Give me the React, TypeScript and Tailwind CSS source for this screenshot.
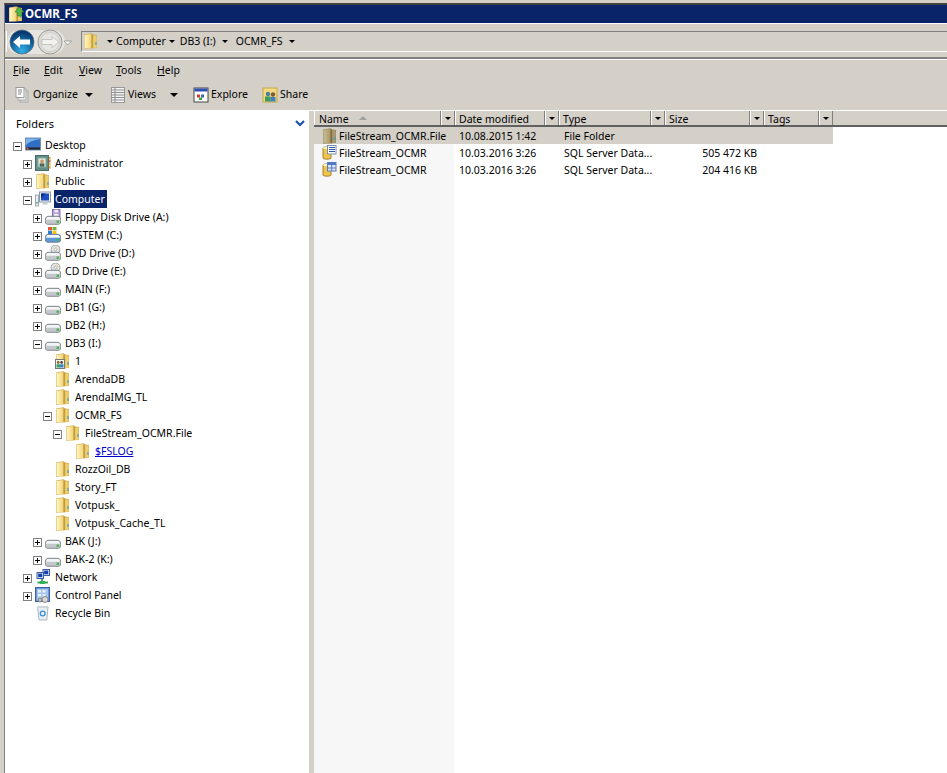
import type { ReactNode } from "react";

type IconName =
  | "desktop"
  | "contact"
  | "folder"
  | "sharedFolder"
  | "computer"
  | "floppy"
  | "system"
  | "optical"
  | "drive"
  | "network"
  | "control"
  | "bin";

type TreeRow = {
  label: string;
  level: 0 | 1 | 2 | 3 | 4 | 5;
  icon: IconName;
  toggle?: "plus" | "minus";
  selected?: boolean;
  link?: boolean;
};

const treeRows: TreeRow[] = [
  { label: "Desktop", level: 0, icon: "desktop", toggle: "minus" },
  { label: "Administrator", level: 1, icon: "contact", toggle: "plus" },
  { label: "Public", level: 1, icon: "folder", toggle: "plus" },
  { label: "Computer", level: 1, icon: "computer", toggle: "minus", selected: true },
  { label: "Floppy Disk Drive (A:)", level: 2, icon: "floppy", toggle: "plus" },
  { label: "SYSTEM (C:)", level: 2, icon: "system", toggle: "plus" },
  { label: "DVD Drive (D:)", level: 2, icon: "optical", toggle: "plus" },
  { label: "CD Drive (E:)", level: 2, icon: "optical", toggle: "plus" },
  { label: "MAIN (F:)", level: 2, icon: "drive", toggle: "plus" },
  { label: "DB1 (G:)", level: 2, icon: "drive", toggle: "plus" },
  { label: "DB2 (H:)", level: 2, icon: "drive", toggle: "plus" },
  { label: "DB3 (I:)", level: 2, icon: "drive", toggle: "minus" },
  { label: "1", level: 3, icon: "sharedFolder" },
  { label: "ArendaDB", level: 3, icon: "folder" },
  { label: "ArendaIMG_TL", level: 3, icon: "folder" },
  { label: "OCMR_FS", level: 3, icon: "folder", toggle: "minus" },
  { label: "FileStream_OCMR.File", level: 4, icon: "folder", toggle: "minus" },
  { label: "$FSLOG", level: 5, icon: "folder", link: true },
  { label: "RozzOil_DB", level: 3, icon: "folder" },
  { label: "Story_FT", level: 3, icon: "folder" },
  { label: "Votpusk_", level: 3, icon: "folder" },
  { label: "Votpusk_Cache_TL", level: 3, icon: "folder" },
  { label: "BAK (J:)", level: 2, icon: "drive", toggle: "plus" },
  { label: "BAK-2 (K:)", level: 2, icon: "drive", toggle: "plus" },
  { label: "Network", level: 1, icon: "network", toggle: "plus" },
  { label: "Control Panel", level: 1, icon: "control", toggle: "plus" },
  { label: "Recycle Bin", level: 1, icon: "bin" },
];

const levelPadding = ["pl-[8px]", "pl-[18px]", "pl-[28px]", "pl-[38px]", "pl-[48px]", "pl-[58px]"];

function FolderShape({ faded }: { faded?: boolean }) {
  return (
    <g>
      <defs>
        <linearGradient id="folderLeaf" x1="0" y1="0" x2="1" y2="0">
          <stop offset="0" stopColor="#fff6c8" />
          <stop offset="1" stopColor="#f2d374" />
        </linearGradient>
        <linearGradient id="folderLeafFaded" x1="0" y1="0" x2="1" y2="0">
          <stop offset="0" stopColor="#c9bd98" />
          <stop offset="1" stopColor="#ab9766" />
        </linearGradient>
      </defs>
      <path d="M1 1.5 L8.5 0.3 L10.3 1.6 L14 2 L14 15 L1 15.8 Z" fill={faded ? "#9c8a5e" : "#d0ad55"} />
      <path d="M1.5 2 L8.5 1 L8.5 15.3 L1.5 15.3 Z" fill={faded ? "url(#folderLeafFaded)" : "url(#folderLeaf)"} />
      <path d="M8.5 1 L10.2 2.3 L10.2 15 L8.5 15.3 Z" fill={faded ? "#7f6d44" : "#c49c40"} />
      <path d="M10.2 2.5 L13.6 2.6 L13.6 14.7 L10.2 15 Z" fill={faded ? "#a8986f" : "#efcf6c"} />
      <rect x="12.4" y="9" width="1.1" height="3" fill="#39a0c0" />
    </g>
  );
}

function Icon({ name }: { name: IconName }) {
  let body: ReactNode = null;
  if (name === "folder") body = <FolderShape />;
  if (name === "sharedFolder")
    body = (
      <>
        <FolderShape />
        <rect x="0.5" y="6.5" width="9" height="9" fill="#f2f2f2" stroke="#777" />
        <circle cx="3.2" cy="9.4" r="1.3" fill="#8a5a2b" />
        <circle cx="6.6" cy="9.4" r="1.3" fill="#4a3a2a" />
        <rect x="1.5" y="11.3" width="3.5" height="3.2" fill="#38a169" />
        <rect x="5" y="11.3" width="3.5" height="3.2" fill="#3b82c4" />
      </>
    );
  if (name === "desktop")
    body = (
      <>
        <rect x="0.5" y="1" width="15" height="12" fill="#2f6fc4" stroke="#7c8fa8" />
        <path d="M1 8 C5 4 10 3 15 2 L15 1.5 L1 1.5 Z" fill="#7db3e8" />
        <rect x="1" y="10.5" width="14" height="2" fill="#222" />
        <rect x="1.5" y="10.8" width="2" height="1.5" fill="#e25b3a" />
      </>
    );
  if (name === "contact")
    body = (
      <>
        <rect x="0.5" y="0.5" width="13" height="15" fill="#5f8f88" stroke="#466b68" />
        <rect x="3" y="3" width="8" height="9" fill="#e4ead6" stroke="#8aa7a0" />
        <circle cx="7" cy="6.3" r="1.9" fill="#c99b6e" />
        <rect x="4.6" y="8.4" width="4.8" height="3.2" fill="#47665f" />
        <rect x="13.8" y="2" width="1.8" height="2.5" fill="#e2a33a" />
        <rect x="13.8" y="5" width="1.8" height="2.5" fill="#d8705c" />
        <rect x="13.8" y="8" width="1.8" height="2.5" fill="#e2c33a" />
        <rect x="13.8" y="11" width="1.8" height="2.5" fill="#e2a33a" />
      </>
    );
  if (name === "computer")
    body = (
      <>
        <rect x="0.5" y="4" width="3" height="11" fill="#e8ecef" stroke="#8b98a5" strokeWidth="0.8" />
        <rect x="1.2" y="11" width="1.6" height="1.6" fill="#55b04f" />
        <rect x="4.5" y="1" width="11" height="10" fill="#eef2f6" stroke="#8b98a5" />
        <rect x="6" y="2.5" width="8" height="7" fill="#1f4fc0" />
        <path d="M6 2.5 H11 L6 7 Z" fill="#0f2f8a" />
        <rect x="7.5" y="11.5" width="5" height="2" fill="#c5ccd3" />
      </>
    );
  if (name === "drive" || name === "floppy" || name === "system" || name === "optical")
    body = (
      <>
        {name === "floppy" && (
          <>
            <rect x="7.5" y="0.5" width="7.5" height="7.5" fill="#b6a3d9" stroke="#6f5a9c" strokeWidth="0.8" />
            <rect x="9.5" y="0.8" width="3.5" height="2.6" fill="#f1edf9" />
            <rect x="9" y="5" width="4.5" height="3" fill="#efecf6" />
          </>
        )}
        {name === "optical" && (
          <>
            <circle cx="10.5" cy="4.5" r="4.5" fill="#dfe3e6" stroke="#8c9296" strokeWidth="0.8" />
            <circle cx="10.5" cy="4.5" r="1.3" fill="#fff" stroke="#8c9296" strokeWidth="0.6" />
            <path d="M10.5 0.5 L14.5 3.5 L11.5 4 Z" fill="#f6d9a6" />
          </>
        )}
        <path
          d="M3 7.3 L13 7.3 C15 7.3 15.7 9.5 15.7 11.5 C15.7 14 15 15.3 13.5 15.3 L2.5 15.3 C1 15.3 0.3 14 0.3 11.5 C0.3 9.5 1 7.3 3 7.3 Z"
          fill={name === "system" ? "#5d98d6" : "#c3c8cc"}
          stroke="#6d7378"
          strokeWidth="0.8"
        />
        <path d="M3 8 L13 8 C14.2 8 14.9 9.6 15 10.8 L1 10.8 C1.1 9.6 1.8 8 3 8 Z" fill="#f4f5f6" />
        <rect x="11.5" y="11.5" width="2.5" height="2.4" fill="#49b548" />
        {name === "system" && (
          <>
            <rect x="3" y="0" width="4" height="3.3" fill="#e8562e" />
            <rect x="7.5" y="0" width="4" height="3" fill="#6cb33f" />
            <rect x="3" y="3.7" width="4" height="3.5" fill="#2f7fd1" />
            <rect x="7.5" y="3.5" width="4" height="3.5" fill="#f2c21a" />
          </>
        )}
      </>
    );
  if (name === "network")
    body = (
      <>
        <rect x="8" y="0.5" width="6.5" height="6" fill="#dbe7f5" stroke="#3a5aa8" />
        <rect x="9.2" y="1.6" width="4" height="3.6" fill="#163fae" />
        <rect x="2" y="3.5" width="6.5" height="6" fill="#dbe7f5" stroke="#3a5aa8" />
        <rect x="3.2" y="4.6" width="4" height="3.6" fill="#163fae" />
        <path d="M7 10 V12.5 M2.5 13.5 H13" stroke="#2fa84f" strokeWidth="1.8" />
        <rect x="5" y="12" width="5" height="3" fill="#35b159" />
      </>
    );
  if (name === "control")
    body = (
      <>
        <rect x="0.5" y="0.5" width="14" height="14" fill="#6f9bdc" stroke="#3c62a5" />
        <rect x="2" y="2" width="11" height="11" fill="#a8c5ec" />
        <rect x="3" y="3" width="3" height="2.5" fill="#e8f0fb" />
        <rect x="7.5" y="3" width="3" height="2.5" fill="#e8f0fb" />
        <rect x="3" y="7" width="3" height="2.5" fill="#e8f0fb" />
        <rect x="7.5" y="7" width="3" height="2.5" fill="#e8f0fb" />
        <circle cx="10" cy="12.5" r="3" fill="#d9d9d9" stroke="#777" strokeWidth="0.8" />
        <circle cx="5" cy="13" r="2" fill="#bbb" stroke="#777" strokeWidth="0.7" />
      </>
    );
  if (name === "bin")
    body = (
      <>
        <path d="M2.5 2 L13 2 L11.8 15 L4 15 Z" fill="#e9eff3" stroke="#9aa7ad" strokeWidth="0.8" />
        <rect x="2.5" y="1" width="10.5" height="2" fill="#cfd8dd" />
        <circle cx="7.7" cy="8.5" r="2.4" fill="none" stroke="#3f8fd6" strokeWidth="1.3" />
      </>
    );
  return (
    <svg width="16" height="16" viewBox="0 0 16 16" className="shrink-0">
      {body}
    </svg>
  );
}

function Toggle({ kind }: { kind?: "plus" | "minus" }) {
  return (
    <span className="flex w-[12px] shrink-0 items-center">
      {kind && (
        <span className="relative mt-[2px] h-[9px] w-[9px] border border-[#808080] bg-white">
          <span className="absolute left-[1px] top-[3px] h-[1px] w-[5px] bg-black" />
          {kind === "plus" && <span className="absolute left-[3px] top-[1px] h-[5px] w-[1px] bg-black" />}
        </span>
      )}
    </span>
  );
}

function Caret({ small, className }: { small?: boolean; className?: string }) {
  const size = small ? "border-x-[3px] border-t-[3px]" : "border-x-[4px] border-t-[4px]";
  return <span className={`h-0 w-0 border-x-transparent border-t-black ${size} ${className ?? ""}`} />;
}

function TreeLine({ row }: { row: TreeRow }) {
  return (
    <div className={`flex h-[18px] items-center ${levelPadding[row.level]}`}>
      <Toggle kind={row.toggle} />
      <span className="w-[19px] shrink-0">
        <Icon name={row.icon} />
      </span>
      <span
        className={`flex h-[18px] items-center whitespace-nowrap pl-[1px] pr-[2px] ${
          row.selected ? "bg-[#0a246a] text-white" : row.link ? "text-[#0000cc] underline" : "text-black"
        }`}
      >
        {row.label}
      </span>
    </div>
  );
}

function HeaderCell({ label, width, sorted }: { label: string; width: string; sorted?: boolean }) {
  return (
    <div className={`flex h-full shrink-0 ${width}`}>
      <div
        className={`flex min-w-0 flex-1 items-center border-x border-l-white border-r-[#808080] bg-[#d4d0c8] ${
          sorted ? "pl-[4px]" : "pl-[3px]"
        }`}
      >
        <span className="mt-[2px]">{label}</span>
        {sorted && (
          <span className="ml-[10px] h-0 w-0 border-x-[4px] border-b-[4px] border-x-transparent border-b-[#a0a0a0]" />
        )}
      </div>
      <div className="flex w-[14px] shrink-0 items-center justify-center border-x border-l-white border-r-[#808080]">
        <Caret small />
      </div>
    </div>
  );
}

function DbIcon({ variant }: { variant: "mdf" | "ldf" }) {
  return (
    <svg width="15" height="15" viewBox="0 0 15 15" className="shrink-0">
      <path d="M1 3 C1 1.5 9 1.5 9 3 L9 13 C9 14.6 1 14.6 1 13 Z" fill="#f0c64a" stroke="#8b6b1c" strokeWidth="0.8" />
      <ellipse cx="5" cy="3" rx="4" ry="1.2" fill="#fdf0b5" />
      {variant === "mdf" ? (
        <>
          <rect x="5.5" y="0.5" width="8.5" height="8.5" fill="#fff" stroke="#7e8fa8" />
          <path d="M7 2.5 H13 M7 4.5 H13 M7 6.5 H13" stroke="#2b55b0" strokeWidth="1" />
        </>
      ) : (
        <>
          <rect x="5.5" y="0.5" width="8.5" height="8.5" fill="#dbe7f8" stroke="#5e7cb8" />
          <rect x="5.5" y="0.5" width="8.5" height="2.5" fill="#4c78c8" />
          <path d="M9.7 3 V9 M5.5 6 H14" stroke="#5e7cb8" strokeWidth="1" />
        </>
      )}
    </svg>
  );
}

function FileRow({ icon, name, date, type, size, selected }: { icon: ReactNode; name: string; date: string; type: string; size?: string; selected?: boolean }) {
  return (
    <div className={`flex h-[17px] w-[519px] items-center ${selected ? "bg-[#d4d0c8]" : ""}`}>
      <div className="flex w-[141px] shrink-0 items-center pl-[8px]">
        <span className="w-[17px] shrink-0">{icon}</span>
        <span className="mt-[2px] whitespace-nowrap">{name}</span>
      </div>
      <span className="mt-[2px] w-[105px] shrink-0 whitespace-nowrap pl-[4px]">{date}</span>
      <span className="mt-[2px] w-[105px] shrink-0 whitespace-nowrap pl-[4px]">{type}</span>
      <span className="mt-[2px] w-[92px] shrink-0 whitespace-nowrap text-right">{size}</span>
    </div>
  );
}

function ToolButton({ icon, label, caret, className }: { icon: ReactNode; label: string; caret?: string; className: string }) {
  return (
    <div className={`flex items-center ${className}`}>
      <span className="w-[18px] shrink-0">{icon}</span>
      <span>{label}</span>
      {caret && <Caret className={caret} />}
    </div>
  );
}

export default function App() {
  return (
    <div className="h-[773px] w-[947px] overflow-hidden bg-[#d4d0c8] pl-[4px] pt-[3px] font-['Noto_Sans',sans-serif] text-[10.5px] leading-none text-black">
      <div className="flex h-full flex-col border-l border-t-2 border-l-[#808080] border-t-[#404040]">
        {/* title bar */}
        <div className="flex h-[18px] shrink-0 items-center bg-[#0a246a] pl-[3px] text-[11.5px] font-bold text-white">
          <svg width="17" height="17" viewBox="0 0 17 17" className="shrink-0">
            <FolderShape />
            <path d="M11 1 L16 6 L13.5 6 L13.5 10 L9.5 10 L9.5 6 L7 6 Z" fill="#4fb848" stroke="#2d7a2a" strokeWidth="0.6" />
          </svg>
          OCMR_FS
        </div>

        {/* address bar */}
        <div className="flex h-[36px] shrink-0 items-stretch border-b-2 border-t border-b-[#808080] border-t-white pb-[5px] pl-[1px] pt-[7px]">
          <div className="flex w-[75px] shrink-0 items-center border-l border-white">
            <svg width="74" height="30" viewBox="0 0 74 30" className="-my-[6px] shrink-0">
              <defs>
                <radialGradient id="backBtn" cx="50%" cy="85%" r="75%">
                  <stop offset="0" stopColor="#2fb0e8" />
                  <stop offset="1" stopColor="#05386f" />
                </radialGradient>
              </defs>
              <rect x="0" y="3" width="58" height="24" rx="12" fill="#e6e4de" />
              <circle cx="15" cy="15" r="12" fill="url(#backBtn)" stroke="#5b6f80" strokeWidth="0.8" />
              <path d="M6 15 L13 9 L13 12.5 L23 12.5 L23 17.5 L13 17.5 L13 21 Z" fill="#fff" />
              <circle cx="43" cy="15" r="12" fill="#dcdad5" stroke="#9a9a9a" />
              <circle cx="43" cy="15" r="9.5" fill="#e6e5e1" stroke="#c6c5c0" strokeWidth="0.6" />
              <path d="M52 15 L45 9.5 L45 12.5 L35 12.5 L35 17.5 L45 17.5 L45 20.5 Z" fill="#f2f2ef" stroke="#b5b5b0" strokeWidth="0.7" />
              <path d="M57 14 L64.5 14 L60.7 18 Z" fill="#f5f5f2" stroke="#8a8a88" strokeWidth="0.7" />
            </svg>
          </div>
          <div className="flex flex-1 items-center border-b border-l border-t border-b-white border-l-[#808080] border-t-[#808080] pb-[1px] pl-[1px]">
            <span className="w-[20px] shrink-0">
              <Icon name="folder" />
            </span>
            <Caret small className="ml-[4px] mr-[3px]" />
            <span>Computer</span>
            <Caret small className="ml-[3px] mr-[5px]" />
            <span>DB3 (I:)</span>
            <Caret small className="ml-[6px] mr-[8px]" />
            <span>OCMR_FS</span>
            <Caret small className="ml-[6px]" />
          </div>
        </div>

        {/* menu bar */}
        <div className="flex h-[23px] shrink-0 items-center border-t border-white pb-[2px] pl-[8px]">
          {[
            ["F", "ile", "w-[31px]"],
            ["E", "dit", "w-[35px]"],
            ["V", "iew", "w-[37px]"],
            ["T", "ools", "w-[41px]"],
            ["H", "elp", "w-[40px]"],
          ].map(([key, rest, w]) => (
            <span key={key} className={w}>
              <span className="underline">{key}</span>
              {rest}
            </span>
          ))}
        </div>

        {/* toolbar */}
        <div className="flex h-[28px] shrink-0 items-center pb-[3px] pl-[10px]">
          <ToolButton
            className="w-[95px]"
            label="Organize"
            caret="ml-[7px]"
            icon={
              <svg width="16" height="16" viewBox="0 0 16 16">
                <rect x="5" y="4" width="8" height="11" fill="#dcdcdc" stroke="#aaa" />
                <rect x="3" y="2" width="8" height="11" fill="#eee" stroke="#aaa" />
                <rect x="1" y="0.5" width="8" height="10" fill="#fff" stroke="#999" />
                <path d="M3 3 H7 M3 5 H7 M3 7 H6" stroke="#888" />
              </svg>
            }
          />
          <ToolButton
            className="w-[83px]"
            label="Views"
            caret="ml-[14px]"
            icon={
              <svg width="16" height="16" viewBox="0 0 16 16">
                <rect x="1.5" y="0.5" width="13" height="15" fill="#f4f4f4" stroke="#999" />
                <path d="M1.5 3 H14.5 M1.5 5.5 H14.5 M1.5 8 H14.5 M1.5 10.5 H14.5 M1.5 13 H14.5 M5 0.5 V15.5" stroke="#8e8e8e" />
              </svg>
            }
          />
          <ToolButton
            className="w-[69px]"
            label="Explore"
            icon={
              <svg width="16" height="16" viewBox="0 0 16 16">
                <rect x="1" y="1" width="14" height="14" fill="#fff" stroke="#444" />
                <rect x="1.5" y="1.5" width="13" height="3" fill="#2c4fb0" />
                <rect x="4" y="7.5" width="3" height="3" fill="#d33" />
                <rect x="8" y="7.5" width="3" height="3" fill="#36a" />
                <rect x="6" y="10.5" width="3" height="2.5" fill="#3a3" />
              </svg>
            }
          />
          <ToolButton
            className="w-[60px]"
            label="Share"
            icon={
              <svg width="16" height="16" viewBox="0 0 16 16">
                <rect x="1" y="1" width="14" height="14" fill="#f3d984" stroke="#c9a540" />
                <circle cx="6" cy="7" r="2.2" fill="#4d7f99" />
                <circle cx="11" cy="7.5" r="2.2" fill="#7a5a3a" />
                <rect x="3" y="9.5" width="5.5" height="5" fill="#3a9d5d" />
                <rect x="8.5" y="10" width="5" height="4.5" fill="#3f7fbf" />
              </svg>
            }
          />
        </div>

        {/* panes */}
        <div className="flex min-h-0 flex-1 border-t border-white">
          <div className="w-[304px] shrink-0 bg-white">
            <div className="flex h-[25px] items-center justify-between pl-[11px] pr-[4px] text-[11px]">
              <span>Folders</span>
              <svg width="10" height="7" viewBox="0 0 10 7">
                <path d="M1 1 L5 5 L9 1" fill="none" stroke="#1f4fa8" strokeWidth="2.2" />
              </svg>
            </div>
            {treeRows.map((row) => (
              <TreeLine key={row.label + row.level} row={row} />
            ))}
          </div>

          <div className="ml-[5px] flex min-w-0 flex-1 flex-col bg-white">
            <div className="flex h-[16px] shrink-0 border-b-2 border-b-[#606060] bg-[#d4d0c8]">
              <HeaderCell label="Name" width="w-[141px]" sorted />
              <HeaderCell label="Date modified" width="w-[104px]" />
              <HeaderCell label="Type" width="w-[106px]" />
              <HeaderCell label="Size" width="w-[99px]" />
              <HeaderCell label="Tags" width="w-[69px]" />
            </div>
            <div className="flex-1 bg-[linear-gradient(to_right,#f7f7f7_140px,#ffffff_140px)]">
              <FileRow
                selected
                icon={
                  <svg width="16" height="16" viewBox="0 0 16 16">
                    <FolderShape faded />
                  </svg>
                }
                name="FileStream_OCMR.File"
                date="10.08.2015 1:42"
                type="File Folder"
              />
              <FileRow icon={<DbIcon variant="mdf" />} name="FileStream_OCMR" date="10.03.2016 3:26" type="SQL Server Data..." size="505 472 KB" />
              <FileRow icon={<DbIcon variant="ldf" />} name="FileStream_OCMR" date="10.03.2016 3:26" type="SQL Server Data..." size="204 416 KB" />
            </div>
          </div>
        </div>
      </div>
    </div>
  );
}
